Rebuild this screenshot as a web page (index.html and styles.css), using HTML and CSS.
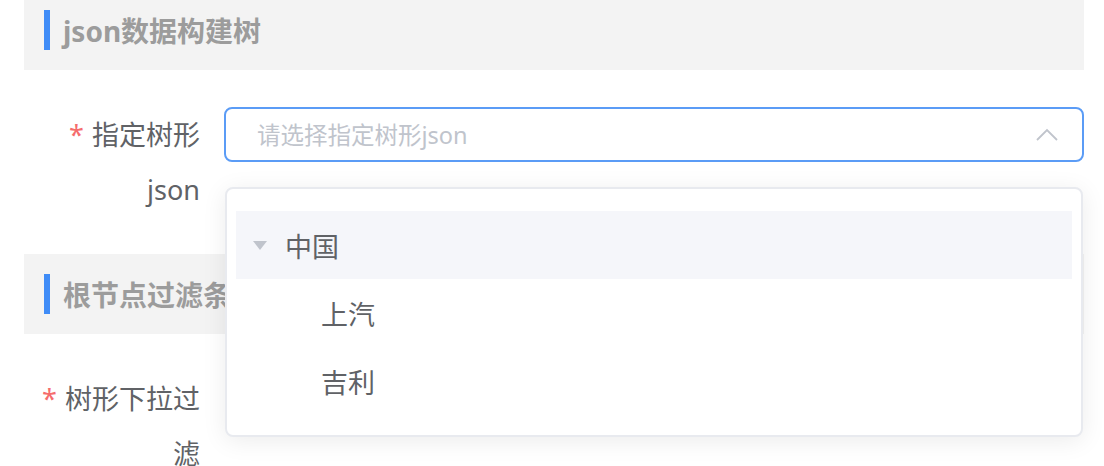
FILE: index.html
```html
<!DOCTYPE html>
<html lang="zh-CN">
<head>
    <meta charset="UTF-8">
    <meta name="viewport" content="width=device-width, initial-scale=1.0">
    <title>json数据构建树</title>
    <link rel="stylesheet" href="styles.css">
</head>
<body>
    <div class="page">
        <div class="section-title">json数据构建树</div>

        <div class="form-item">
            <label class="form-label required">指定树形json</label>
            <div class="form-content">
                <div class="select is-focus">
                    <input type="text" class="select-input" placeholder="请选择指定树形json">
                    <svg class="select-arrow" width="22" height="13" viewBox="0 0 22 13">
                        <polyline points="1,12 11,2 21,12" fill="none" stroke="#c0c4cc" stroke-width="1.8"/>
                    </svg>
                </div>

                <div class="dropdown">
                    <div class="tree-node is-current">
                        <span class="expand-icon"></span>
                        <span class="node-label">中国</span>
                    </div>
                    <div class="tree-node child">
                        <span class="expand-icon is-leaf"></span>
                        <span class="node-label">上汽</span>
                    </div>
                    <div class="tree-node child">
                        <span class="expand-icon is-leaf"></span>
                        <span class="node-label">吉利</span>
                    </div>
                </div>
            </div>
        </div>

        <div class="section-title">根节点过滤条件</div>

        <div class="form-item">
            <label class="form-label required">树形下拉过滤</label>
            <div class="form-content"></div>
        </div>
    </div>
</body>
</html>
```

FILE: styles.css
```css
body {
    margin: 0;
    padding: 0;
    background: #fff;
    font-family: "Noto Sans", "Noto Sans CJK SC", sans-serif;
    color: #606266;
}

.page {
    display: flex;
    flex-direction: column;
    gap: 37px;
    margin: -10px 20px 0 24px;
}

.section-title {
    display: flex;
    align-items: center;
    gap: 13px;
    height: 80px;
    padding-left: 20px;
    background: #f3f3f3;
    font-size: 28px;
    font-weight: bold;
    color: #9c9c9c;
}

.section-title::before {
    content: "";
    width: 6px;
    height: 40px;
    background: #3f8cf7;
}

.form-item {
    display: flex;
}

.form-label {
    flex: 0 0 200px;
    box-sizing: border-box;
    padding-right: 24px;
    text-align: right;
    font-size: 27px;
    line-height: 55px;
    color: #606266;
}

.required::before {
    content: "*";
    color: #f56c6c;
    margin-right: 8px;
}

.form-content {
    flex: 1;
    position: relative;
}

.select {
    display: flex;
    align-items: center;
    height: 55px;
    box-sizing: border-box;
    border: 2px solid #dcdfe6;
    border-radius: 8px;
    padding: 0 24px 0 31px;
}

.select.is-focus {
    border-color: #5b9cf6;
}

.select-input {
    flex: 1;
    border: none;
    outline: none;
    padding: 0;
    font-family: inherit;
    font-size: 23.5px;
    color: #606266;
    background: transparent;
}

.select-input::placeholder {
    color: #c0c4cc;
}

.dropdown {
    position: absolute;
    top: 80px;
    left: 1px;
    right: 1px;
    padding: 22px 9px 20px;
    background: #fff;
    border: 2px solid #e8eaef;
    border-radius: 8px;
    box-shadow: 0 4px 24px rgba(0, 0, 0, 0.08);
}

.tree-node {
    display: flex;
    align-items: center;
    height: 68px;
    font-size: 27px;
    color: #606266;
}

.tree-node.is-current {
    background: #f5f6fa;
}

.tree-node.child {
    padding-left: 36px;
}

.expand-icon {
    width: 0;
    height: 0;
    margin: 0 18px 0 17px;
    border-left: 7.5px solid transparent;
    border-right: 7.5px solid transparent;
    border-top: 9px solid #c0c4cc;
}

.expand-icon.is-leaf {
    border-top-color: transparent;
}
```
